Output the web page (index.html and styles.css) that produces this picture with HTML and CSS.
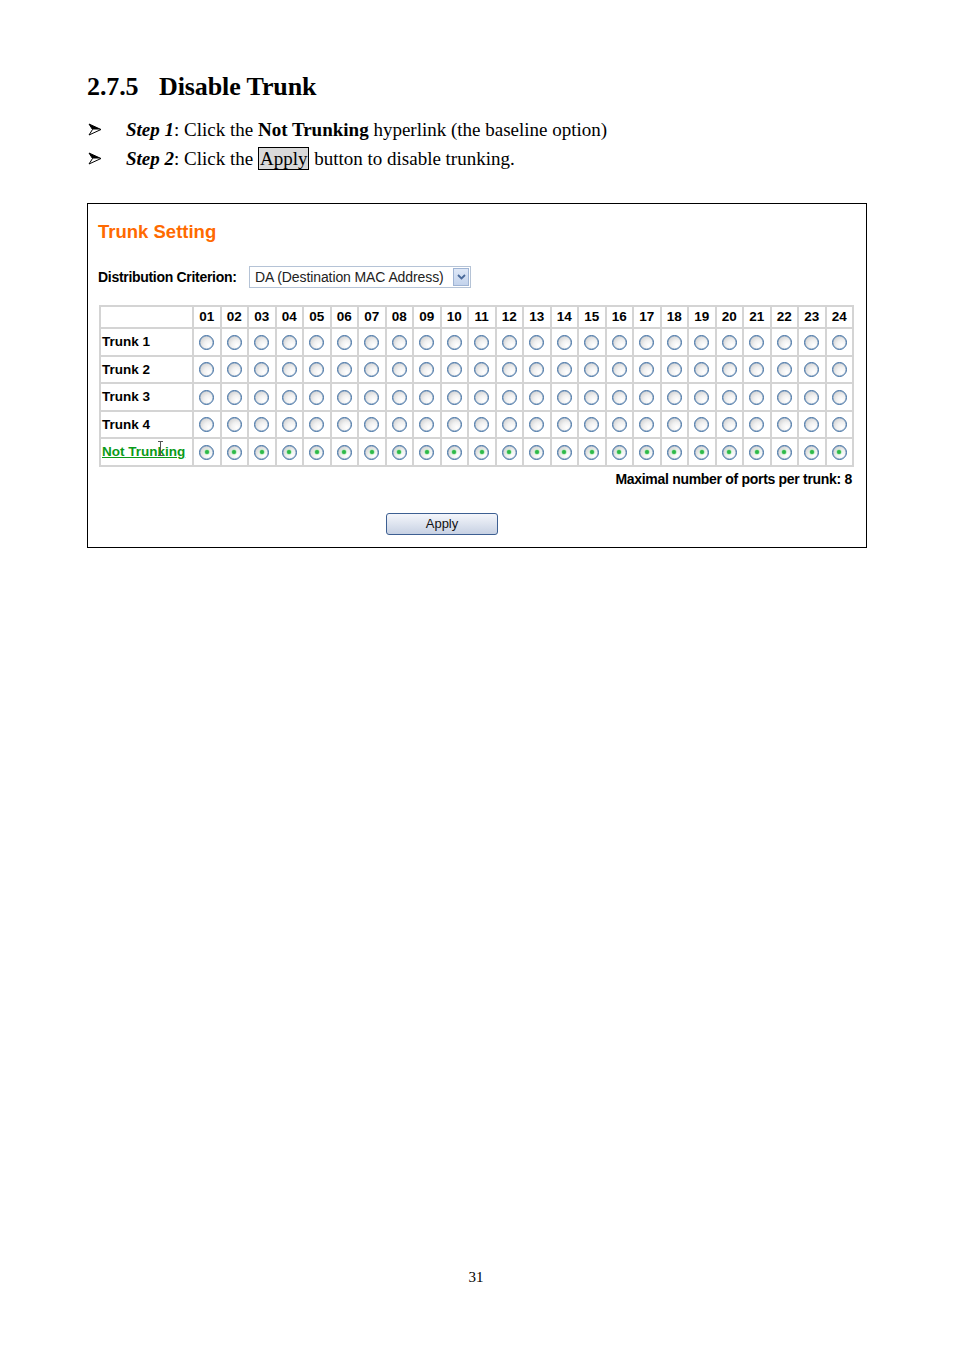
FILE: index.html
```html
<!DOCTYPE html>
<html>
<head>
<meta charset="utf-8">
<link rel="stylesheet" href="styles.css">
</head>
<body>
<div class="page">
  <h2 class="heading"><span class="num">2.7.5</span>Disable Trunk</h2>
  <ul class="steps">
    <li><span class="arrow"><svg width="14" height="13" viewBox="0 0 14 13"><path d="M1 1 L13 6.5 L1 12 L4.5 6.5 Z" fill="#fff" stroke="#000" stroke-width="1" stroke-linejoin="miter"/><path d="M1 1 L13 6.5 L4.5 6.5 Z" fill="#000"/></svg></span><span><b><i>Step 1</i></b>: Click the <b>Not Trunking</b> hyperlink (the baseline option)</span></li>
    <li><span class="arrow"><svg width="14" height="13" viewBox="0 0 14 13"><path d="M1 1 L13 6.5 L1 12 L4.5 6.5 Z" fill="#fff" stroke="#000" stroke-width="1" stroke-linejoin="miter"/><path d="M1 1 L13 6.5 L4.5 6.5 Z" fill="#000"/></svg></span><span><b><i>Step 2</i></b>: Click the <span class="applybox">Apply</span> button to disable trunking.</span></li>
  </ul>

  <div class="panel">
    <div class="title">Trunk Setting</div>
    <div class="criterion">
      <span class="crit-label">Distribution Criterion:</span>
      <span class="select"><span class="select-text">DA (Destination MAC Address)</span><span class="select-btn"><svg width="9" height="6" viewBox="0 0 9 6"><path d="M1 1 L4.5 4.5 L8 1" fill="none" stroke="#4a6a9a" stroke-width="1.8"/></svg></span></span>
    </div>
    <table class="grid" id="grid">
      <colgroup><col class="c-first"></colgroup>
      <thead><tr id="hdr"><th class="first"></th></tr></thead>
      <tbody id="body"></tbody>
    </table>
    <div class="maxnote">Maximal number of ports per trunk: 8</div>
    <div class="btnrow"><span class="button">Apply</span></div>
  </div>

  <div class="pagenum">31</div>
</div>
<script src="script.js"></script>
</body>
</html>
```

FILE: script.js
```js
(function(){
  var hdr = document.getElementById('hdr');
  for (var i = 1; i <= 24; i++) {
    var th = document.createElement('th');
    th.textContent = (i < 10 ? '0' : '') + i;
    hdr.appendChild(th);
  }
  var body = document.getElementById('body');
  var names = ['Trunk 1','Trunk 2','Trunk 3','Trunk 4','Not Trunking'];
  names.forEach(function(n, r){
    var tr = document.createElement('tr');
    var td = document.createElement('td');
    td.className = 'first';
    if (r === 4) {
      td.innerHTML = '<span class="link">Not Trunking<span class="ibeam"></span></span>';
    } else {
      td.textContent = n;
    }
    tr.appendChild(td);
    for (var i = 0; i < 24; i++) {
      var c = document.createElement('td');
      c.innerHTML = '<span class="radio' + (r === 4 ? ' on' : '') + '"></span>';
      tr.appendChild(c);
    }
    body.appendChild(tr);
  });
})();
```

FILE: styles.css
```css
html, body { margin: 0; padding: 0; background: #fff; }
.page { padding: 72px 0 0 87px; width: 780px; font-family: "Liberation Serif", "Times New Roman", serif; color: #000; }

.heading { margin: 0; font-size: 26px; font-weight: bold; line-height: 30px; display: flex; letter-spacing: -0.1px; }
.heading .num { width: 72px; }

.steps { list-style: none; margin: 13px 0 0 0; padding: 0; font-size: 19px; line-height: 29px; }
.steps li { display: flex; align-items: center; }
.steps .arrow { width: 38px; display: flex; align-items: center; padding-left: 1px; }
.applybox { background: #d9d9d9; border: 1px solid #000; padding: 0 1px; }

.panel { margin-top: 30px; border: 1px solid #000; height: 343px; padding: 0 11px 0 10px; font-family: "Liberation Sans", Arial, sans-serif; }
.title { color: #ff6a00; font-weight: bold; font-size: 18.5px; margin-top: 17px; line-height: 22px; }
.criterion { display: flex; align-items: center; margin-top: 22px; height: 24px; }
.crit-label { font-weight: bold; font-size: 14px; width: 151px; letter-spacing: -0.3px; }
.select { display: flex; align-items: center; height: 22px; border: 1px solid #b5c3d6; box-sizing: border-box; width: 222px; background: #fff; }
.select-text { flex: 1; font-size: 14px; padding-left: 5px; color: #222; letter-spacing: -0.1px; }
.select-btn { width: 16px; height: 18px; margin-right: 1px; background: linear-gradient(#dfe8f7, #c3d3ec); border: 1px solid #9fb4d4; box-sizing: border-box; display: flex; align-items: center; justify-content: center; }

.grid { margin: 16px 0 0 1px; border-collapse: collapse; width: 755px; table-layout: fixed; font-size: 13.5px; font-weight: bold; border: 2px solid #cfcfcf; }
.grid col.c-first { width: 93px; }
.grid th, .grid td { border: 2px solid #d4d4d4; padding: 0; text-align: center; }
.grid th { height: 20px; line-height: 18px; }
.grid td { height: 25.5px; }
.grid .first { text-align: left; padding-left: 1px; }
.radio { display: inline-block; width: 13px; height: 13px; border: 1px solid #3f6fa3; border-radius: 50%; vertical-align: middle; background: radial-gradient(circle at 68% 72%, #ffffff 0%, #f0f0f0 40%, #c2c2c2 100%); position: relative; box-shadow: inset 0 0 0 0.5px #8fa9c6; }
.radio.on::after { content: ""; position: absolute; left: 4.5px; top: 4.5px; width: 4px; height: 4px; border-radius: 50%; background: #2fb84a; box-shadow: 0 0 1px 0.5px #8de496; }
.link { color: #0a9a18; text-decoration: underline; position: relative; }
.ibeam { position: absolute; left: 58px; top: -3px; width: 1px; height: 15px; background: #555; }
.ibeam::before, .ibeam::after { content: ""; position: absolute; left: -2px; width: 5px; height: 1px; background: #555; }
.ibeam::before { top: 0; }
.ibeam::after { bottom: 0; }

.maxnote { text-align: right; font-weight: bold; font-size: 14px; margin-top: 4px; padding-right: 3px; letter-spacing: -0.3px; line-height: 16px; }
.btnrow { display: flex; margin-top: 26px; padding-left: 288px; }
.button { width: 112px; height: 22px; box-sizing: border-box; border: 1px solid #3d5f92; border-radius: 3px; background: linear-gradient(#f4f6fb, #c7d1e3); font-size: 13px; text-align: center; line-height: 20px; color: #111; }

.pagenum { text-align: center; font-size: 15px; margin-top: 721px; padding-right: 2px; }
```
